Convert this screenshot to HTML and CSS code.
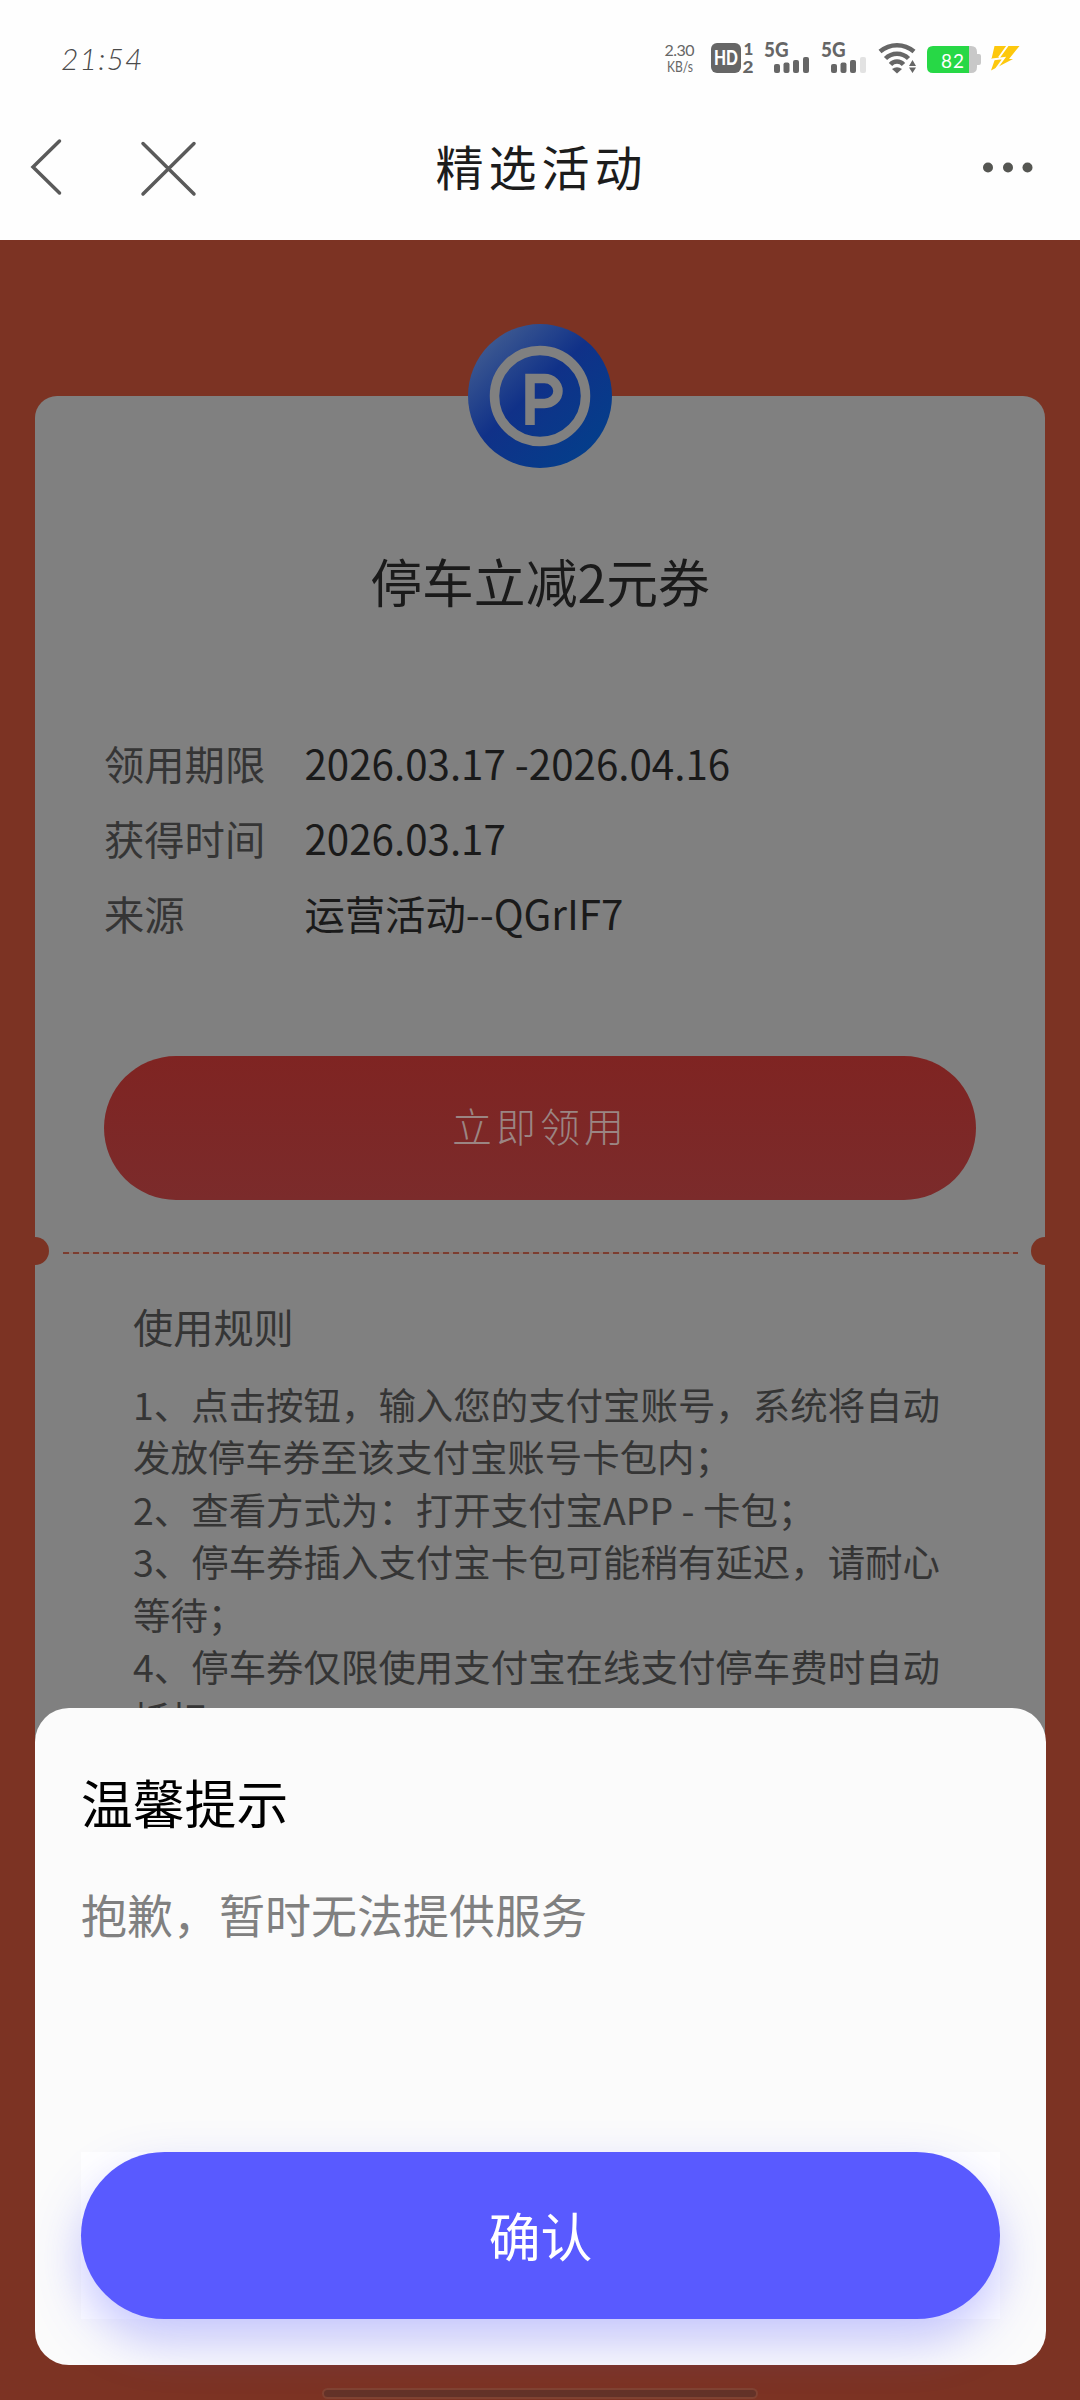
FILE: index.html
```html
<!DOCTYPE html>
<html lang="zh-CN">
<head>
<meta charset="utf-8">
<title>精选活动</title>
<link rel="stylesheet" href="styles.css">
</head>
<body>
<div class="screen">
  <header class="top">
    <div class="status">
      <span class="time">21:54</span>
      <svg class="status-icons" width="380" height="40" viewBox="650 38 380 40">
        <g class="speed">
          <text x="664.500" y="56" textLength="30">2.30</text>
          <text x="667" y="72" textLength="26" lengthAdjust="spacingAndGlyphs">KB/s</text>
        </g>
        <g class="ink">
          <rect x="711" y="43" width="30" height="30" rx="6"/>
          <text class="hd" x="714" y="65" textLength="24" lengthAdjust="spacingAndGlyphs">HD</text>
          <text class="sim" x="743.500" y="55">1</text>
          <text class="sim" x="742.500" y="72.500" textLength="11" lengthAdjust="spacingAndGlyphs">2</text>
          <text class="net" x="764" y="57" textLength="24.500" lengthAdjust="spacingAndGlyphs">5G</text>
          <rect x="774" y="64" width="6" height="9" rx="2"/>
          <rect x="783.500" y="62.500" width="6" height="10.500" rx="2"/>
          <rect x="793" y="60" width="6" height="13" rx="2"/>
          <rect x="803" y="57" width="6" height="16" rx="2"/>
          <text class="net" x="821" y="57" textLength="24.500" lengthAdjust="spacingAndGlyphs">5G</text>
          <rect x="831" y="64" width="6" height="9" rx="2"/>
          <rect x="840.500" y="62.500" width="6" height="10.500" rx="2"/>
          <rect x="850" y="60" width="6" height="13" rx="2"/>
          <rect class="off" x="860" y="57" width="6" height="16" rx="2"/>
          <path d="M892 69a9 9 0 0 1 10 0l-5 4.500z"/>
          <path d="M909 66l3.500-6 3.500 6zM909 67.500h7l-3.500 5.500z"/>
        </g>
        <g class="waves">
          <path d="M880 51.500C890 43 904 43 914 51.500"/>
          <path d="M885.500 58.500C892 52 902 52 908.500 58.500"/>
          <path d="M890.500 64.500C894 60.500 900 60.500 903.500 64.500"/>
        </g>
        <path class="cell-rest" d="M965 46h6q6 0 6 6v2h2q2 0 2 2v7q0 2-2 2h-2v2q0 6-6 6h-6z"/>
        <path class="cell" d="M933 46h36v27h-36q-6 0-6-6v-15q0-6 6-6z"/>
        <text class="level" x="941" y="67.500" textLength="23">82</text>
        <path class="bolt" d="M994.500 46H1019.500L1009 59H1013L991 70.500L995 59H991.500Z"/>
        <path class="bolt-gap" d="M1008 45L999 57.500M992 59.500L1004 58 996 69"/>
      </svg>
    </div>
    <nav class="nav">
      <svg class="nav-left" width="200" height="70" viewBox="0 0 200 70">
        <path d="M59.500 8L33 34 59.500 60M143 10.500L194 61M194 10.500L143 61"/>
      </svg>
      <h1 class="nav-title">精选活动</h1>
      <svg class="nav-more" width="60" height="20" viewBox="0 0 60 20">
        <circle cx="11" cy="9.500" r="5"/><circle cx="31" cy="9.500" r="5"/><circle cx="50.500" cy="9.500" r="5"/>
      </svg>
    </nav>
  </header>
  <main class="page">
    <section class="card">
      <svg class="badge" width="144" height="144" viewBox="0 0 144 144">
        <defs>
          <linearGradient id="blue" x1=".12" y1=".12" x2=".85" y2=".9">
            <stop offset="0" stop-color="#3e5a91"/>
            <stop offset=".45" stop-color="#103188"/>
            <stop offset="1" stop-color="#043e8b"/>
          </linearGradient>
        </defs>
        <circle cx="72" cy="72" r="72" fill="url(#blue)"/>
        <circle class="ring" cx="72" cy="72" r="45.500"/>
        <path class="park" d="M62 101V54.500H76.500a13.500 12.500 0 0 1 0 25H62"/>
      </svg>
      <h2 class="coupon">停车立减2元券</h2>
      <dl class="info">
        <dt>领用期限</dt><dd>2026.03.17 -2026.04.16</dd>
        <dt>获得时间</dt><dd>2026.03.17</dd>
        <dt>来源</dt><dd>运营活动--QGrIF7</dd>
      </dl>
      <button class="claim">立即领用</button>
      <div class="tear"><i class="notch"></i><i class="dashes"></i><i class="notch right"></i></div>
      <div class="rules">
        <h3>使用规则</h3>
        <p>1、点击按钮，输入您的支付宝账号，系统将自动<br>发放停车券至该支付宝账号卡包内；</p>
        <p>2、查看方式为：打开支付宝APP - 卡包；</p>
        <p>3、停车券插入支付宝卡包可能稍有延迟，请耐心<br>等待；</p>
        <p>4、停车券仅限使用支付宝在线支付停车费时自动<br>抵扣。</p>
      </div>
    </section>
  </main>
  <section class="sheet">
    <h2>温馨提示</h2>
    <p>抱歉，暂时无法提供服务</p>
    <div class="confirm-box"><button class="confirm">确认</button></div>
  </section>
  <div class="home-bar"></div>
</div>
</body>
</html>
```

FILE: styles.css
```css
* { box-sizing: border-box; margin: 0; padding: 0; }
body { font-family: "Noto Sans CJK SC", sans-serif; }
h1, h2, h3 { font-weight: 400; }
button { border: 0; font-family: inherit; display: block; }
svg { display: block; }

.screen { position: relative; width: 1080px; height: 2400px; overflow: hidden; background: #7c3323; }

.top { height: 240px; background: #fefefe; }
.status { height: 116px; padding: 38px 50px 0 61px; display: flex; justify-content: space-between; }
.time { font: italic 300 30px/40px Lato, sans-serif; letter-spacing: 1.2px; color: #4a4a4a; }
.ink { fill: #666; }
.off { fill: #e2e2e2; }
.speed { font: 400 16px Lato, sans-serif; fill: #666; }
.hd { font: 900 20px Lato, sans-serif; fill: #fff; }
.sim { font: 900 17px Lato, sans-serif; }
.net { font: 900 20px Lato, sans-serif; }
.waves { fill: none; stroke: #666; stroke-width: 4.5; }
.cell-rest { fill: #c8c8c8; }
.cell { fill: #27d846; }
.level { font: 400 19px Lato, sans-serif; fill: #fff; }
.bolt { fill: #fdc80d; }
.bolt-gap { fill: none; stroke: #fefefe; stroke-width: 2; }

.nav { height: 104px; display: grid; grid-template-columns: 270px 1fr 270px; align-items: center; }
.nav-left { fill: none; stroke: #5a5a5a; stroke-width: 3.5; stroke-linecap: round; }
.nav-title { text-align: center; font-size: 48px; line-height: 60px; letter-spacing: 5px; padding: 0 0 7px 3px; color: #1c1c1c; }
.nav-more { justify-self: end; margin-right: 43px; fill: #555652; }

.page { padding: 156px 35px 0; }
.card { height: 1900px; border-radius: 22px 22px 0 0; background: #808080; display: flex; flex-direction: column; }
.badge { align-self: center; margin-top: -72px; }
.ring, .park { fill: none; stroke: #808080; stroke-width: 9.5; }
.coupon { margin-top: 77px; height: 72px; text-align: center; font-size: 51.8px; line-height: 72px; color: #1a1a1a; }
.info { margin: 108px 69px 0; display: grid; grid-template-columns: 200.5px 1fr; grid-auto-rows: 75px; font-size: 40.3px; line-height: 75px; white-space: nowrap; }
.info dt { color: #353535; }
.info dd { color: #1a1a1a; }
.claim { height: 144px; margin: 106px 69px 0; padding-bottom: 7px; border-radius: 72px; background: linear-gradient(#7f2422, #7b2b2b); font-size: 40px; font-weight: 300; letter-spacing: 4px; color: #9b8583; }
.tear { height: 28px; margin-top: 37px; display: flex; justify-content: space-between; align-items: center; }
.notch { width: 14px; height: 28px; border-radius: 0 14px 14px 0; background: #7c3323; }
.notch.right { border-radius: 14px 0 0 14px; }
.dashes { width: 955px; height: 2px; margin-top: 3px; background: repeating-linear-gradient(90deg, #7c3d30 0 6px, #88766f 6px 10px); }
.rules { padding: 31px 98px 0; color: #353535; font-size: 37.45px; line-height: 52.4px; white-space: nowrap; }
.rules h3 { font-size: 40.2px; line-height: 60px; margin-bottom: 22px; }

.sheet { position: absolute; left: 35px; top: 1708px; width: 1011px; height: 657px; padding: 58px 46px 0; border-radius: 34px; background: #fbfbfb; }
.sheet h2 { font-size: 51.8px; line-height: 72px; color: #000; }
.sheet p { margin-top: 41px; font-size: 46px; line-height: 68px; color: #808080; }
.confirm-box { margin-top: 205px; height: 167px; background: #fff; }
.confirm { width: 100%; height: 167px; padding-bottom: 3px; border-radius: 84px; background: #595aff; color: #fff; font-size: 51.8px; box-shadow: 0 22px 48px rgba(89, 90, 255, .34); }
.home-bar { position: absolute; left: 322px; top: 2388px; width: 436px; height: 11px; border: 2px solid #7f4232; border-radius: 6px; background: #633228; }
```
